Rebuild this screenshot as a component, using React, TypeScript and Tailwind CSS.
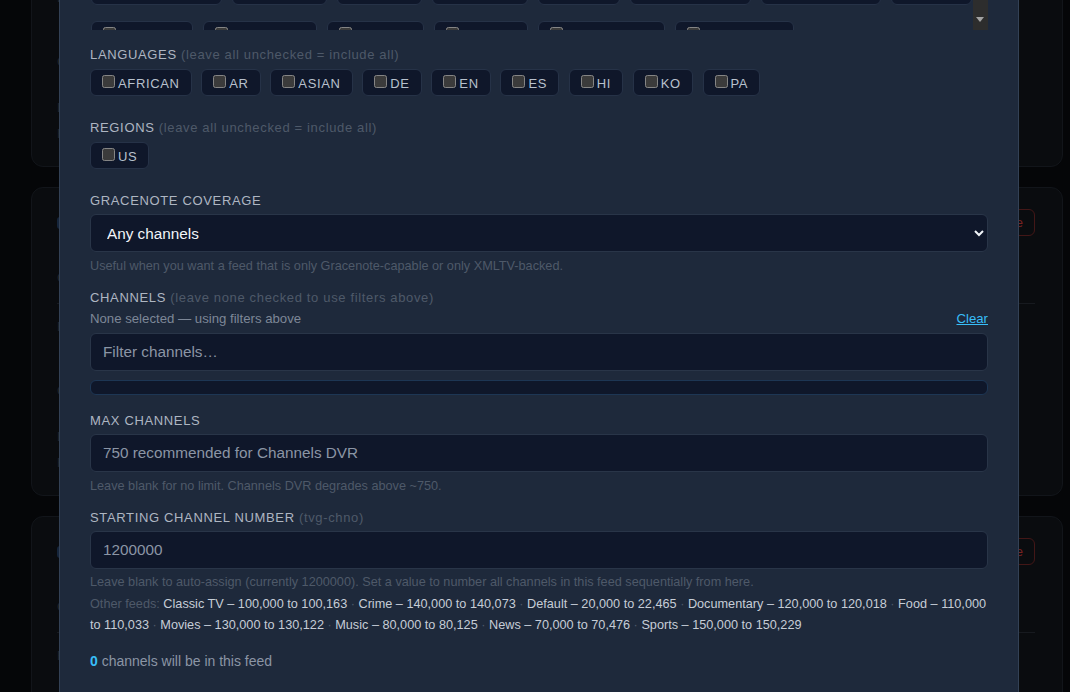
import React from "react";

type ChipDef = { label: string; w?: string };

const rowHidden1: ChipDef[] = [
  { label: "ACTION", w: "w-[96px]" },
  { label: "ANIMATION", w: "w-[118px]" },
  { label: "AUTO", w: "w-[80px]" },
  { label: "BUSINESS", w: "w-[110px]" },
  { label: "CLASSIC TV", w: "w-[124px]" },
  { label: "COMEDY", w: "w-[100px]" },
  { label: "CRIME", w: "w-[86px]" },
];
const rowHidden2: ChipDef[] = [
  { label: "DOCUMENTARY", w: "w-[140px]" },
  { label: "DRAMA", w: "w-[92px]" },
  { label: "EDUCATION", w: "w-[118px]" },
  { label: "ESPAÑOL", w: "w-[104px]" },
  { label: "FAITH", w: "w-[82px]" },
  { label: "FAMILY", w: "w-[90px]" },
  { label: "FOOD", w: "w-[80px]" },
];
const rowA: ChipDef[] = [
  { label: "ENTERTAINMENT", w: "w-[131px]" },
  { label: "GAME SHOWS", w: "w-[95px]" },
  { label: "GAMING", w: "w-[85px]" },
  { label: "HISTORY", w: "w-[96px]" },
  { label: "HOME", w: "w-[82px]" },
  { label: "INTERNATIONAL", w: "w-[121px]" },
  { label: "KIDS & FAMILY", w: "w-[120px]" },
  { label: "LOCAL", w: "w-[81px]" },
];
const rowB: ChipDef[] = [
  { label: "MOVIES", w: "w-[102px]" },
  { label: "MUSIC", w: "w-[114px]" },
  { label: "NATURE", w: "w-[97px]" },
  { label: "NEWS", w: "w-[94px]" },
  { label: "REALITY TV", w: "w-[127px]" },
  { label: "SCI-FI", w: "w-[119px]" },
];
const rowC: ChipDef[] = [
  { label: "SPORTS", w: "w-[96px]" },
  { label: "TRAVEL", w: "w-[96px]" },
  { label: "WEATHER", w: "w-[106px]" },
  { label: "WESTERNS", w: "w-[112px]" },
];

const languages = ["AFRICAN", "AR", "ASIAN", "DE", "EN", "ES", "HI", "KO", "PA"];

const feeds = [
  "Classic TV – 100,000 to 100,163",
  "Crime – 140,000 to 140,073",
  "Default – 20,000 to 22,465",
  "Documentary – 120,000 to 120,018",
  "Food – 110,000 to 110,033",
  "Movies – 130,000 to 130,122",
  "Music – 80,000 to 80,125",
  "News – 70,000 to 70,476",
  "Sports – 150,000 to 150,229",
];

function Chip({ label, w }: ChipDef) {
  return (
    <label
      className={`flex h-[27px] shrink-0 items-center overflow-hidden whitespace-nowrap rounded-[6px] border border-[#263247] bg-[#0f172a] pl-[11px] pr-[11px] text-[13px] leading-4 tracking-[0.05em] text-[#b8c1cd] ${w ?? ""}`}
    >
      <input type="checkbox" className="m-0 mr-[3px] h-[13px] w-[13px] shrink-0 -translate-y-[1px]" />
      <span className="relative top-[1px]">{label}</span>
    </label>
  );
}

function ChipRow({ items }: { items: ChipDef[] }) {
  return (
    <div className="flex gap-[10px]">
      {items.map((c) => (
        <Chip key={c.label} label={c.label} w={c.w} />
      ))}
    </div>
  );
}

function Label({ text, hint, className }: { text: string; hint?: string; className?: string }) {
  return (
    <div className={`text-[13px] leading-[20px] tracking-[0.05em] text-[#aeb6c2] ${className ?? ""}`}>
      {text}
      {hint && <span className="text-[#4e5969]"> {hint}</span>}
    </div>
  );
}

function TextInput({ placeholder, className }: { placeholder: string; className?: string }) {
  return (
    <input
      type="text"
      placeholder={placeholder}
      className={`block h-[38px] w-full rounded-[6px] border border-[#293548] bg-[#0f172a] px-[12px] pb-[1px] text-[15.3px] text-[#e2e8f0] outline-none placeholder:text-[#8b95a5] ${className ?? ""}`}
    />
  );
}

function BgCard() {
  return (
    <div className="h-[309px] shrink-0 rounded-[12px] border border-[#12151a] bg-[#0a0c0f] pl-[25px] pr-[27px] pt-[21px]">
      <div className="flex h-[27px] items-center justify-between">
        <div className="flex items-center gap-2">
          <span className="h-[12px] w-[22px] rounded-[3px] bg-[#15253b]" />
          <span className="text-[15px] text-[#262a31]">Feed</span>
        </div>
        <button className="h-[27px] rounded-[6px] border border-[#431717] px-[11px] text-[13px] text-[#782222]">
          Delete
        </button>
      </div>
      <div className="mt-[34px] text-[13px] leading-4 text-[#23272d]">Channels in this feed</div>
      <div className="mt-[17px] h-px bg-[#171a1f]" />
      <div className="mt-[15px] text-[13px] leading-4 text-[#23272d]">Filters</div>
      <div className="mt-[48px] text-[13px] leading-4 text-[#23272d]">Categories</div>
      <div className="mt-[30px] text-[13px] leading-4 text-[#23272d]">Languages</div>
      <div className="mt-[10px] text-[13px] leading-4 text-[#23272d]">Regions</div>
    </div>
  );
}

export default function App() {
  return (
    <div className="relative h-[692px] w-full overflow-hidden bg-[#050608] font-['Liberation_Sans',Arial,sans-serif] [color-scheme:dark]">
      <div className="-mt-[142px] ml-[31px] flex w-[1032px] flex-col gap-[20px]">
        <BgCard />
        <BgCard />
        <BgCard />
      </div>

      <div className="absolute left-[59px] top-0 h-[692px] w-[960px] overflow-hidden border-x border-[#334155] bg-[#1e293b] px-[30px]">
        <div className="-mt-[110px]">
          <div className="flex h-[140px] overflow-hidden">
            <div className="min-w-0 flex-1 overflow-hidden">
              <div className="flex flex-col gap-[16px] pl-[1px] pt-[2px]">
                <ChipRow items={rowHidden1} />
                <ChipRow items={rowHidden2} />
                <ChipRow items={rowA} />
                <ChipRow items={rowB} />
                <ChipRow items={rowC} />
              </div>
            </div>
            <div className="relative w-[15px] shrink-0 bg-[#2d2d2d]">
              <div className="absolute bottom-[8px] left-[3px] h-0 w-0 border-x-[4.5px] border-t-[5px] border-x-transparent border-t-[#a3a3a3]" />
            </div>
          </div>

          <Label className="mt-[15px]" text="LANGUAGES" hint="(leave all unchecked = include all)" />
          <div className="mt-[4px] flex gap-[9.7px]">
            {languages.map((l) => (
              <Chip key={l} label={l} />
            ))}
          </div>

          <Label className="mt-[22px]" text="REGIONS" hint="(leave all unchecked = include all)" />
          <div className="mt-[4px] flex gap-[9.7px]">
            <Chip label="US" />
          </div>

          <Label className="mt-[22px]" text="GRACENOTE COVERAGE" />
          <select className="mt-[3px] block h-[38px] w-full rounded-[6px] border border-[#293548] bg-[#0f172a] pl-[12px] pr-[8px] text-[15.3px] text-[#f1f5f9] outline-none">
            <option>Any channels</option>
            <option>Gracenote-capable only</option>
            <option>XMLTV-backed only</option>
          </select>
          <div className="mt-[6px] text-[12.7px] leading-4 text-[#4e5969]">
            Useful when you want a feed that is only Gracenote-capable or only XMLTV-backed.
          </div>

          <Label className="mt-[14px]" text="CHANNELS" hint="(leave none checked to use filters above)" />
          <div className="mt-[3px] flex items-center justify-between text-[13.2px] leading-4">
            <span className="text-[#7d8797]">None selected — using filters above</span>
            <a className="cursor-pointer text-[#38bdf8] underline">Clear</a>
          </div>
          <TextInput className="mt-[6px]" placeholder="Filter channels…" />
          <div className="mt-[9px] h-[15px] rounded-[6px] border border-[#1d3654] bg-[#0f172a]" />

          <Label className="mt-[16px]" text="MAX CHANNELS" />
          <TextInput className="mt-[3px]" placeholder="750 recommended for Channels DVR" />
          <div className="mt-[6px] text-[12.7px] leading-4 text-[#4e5969]">
            Leave blank for no limit. Channels DVR degrades above ~750.
          </div>

          <Label className="mt-[14px]" text="STARTING CHANNEL NUMBER" hint="(tvg-chno)" />
          <TextInput className="mt-[3px]" placeholder="1200000" />
          <div className="mt-[5px] text-[12.7px] leading-4 text-[#4e5969]">
            Leave blank to auto-assign (currently 1200000). Set a value to number all channels in this feed sequentially from here.
          </div>
          <div className="mt-[4px] text-[12.7px] leading-[21px] text-[#c6cdd7]">
            <span className="text-[#4e5969]">Other feeds: </span>
            {feeds.map((f, i) => (
              <React.Fragment key={f}>
                {i > 0 && <span className="text-[#4e5969]"> · </span>}
                <span>{f}</span>
              </React.Fragment>
            ))}
          </div>

          <div className="mt-[15px] text-[14px] leading-5 text-[#8b95a5]">
            <span className="font-bold text-[#38bdf8]">0</span> channels will be in this feed
          </div>
        </div>
      </div>
    </div>
  );
}
